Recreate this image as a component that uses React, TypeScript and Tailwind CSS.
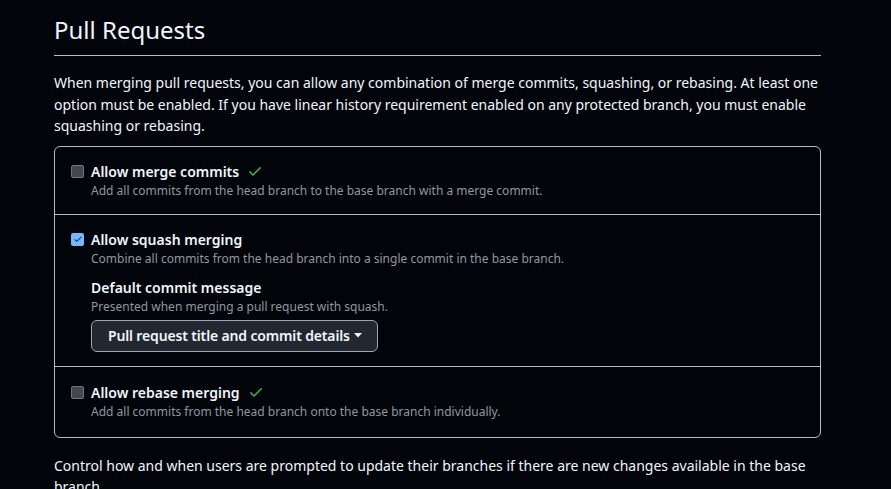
import React from 'react';

const Check = () => (
  <svg width="16" height="16" viewBox="0 0 16 16" className="ml-[8px] text-[#3fb950]" fill="currentColor">
    <path d="M13.78 4.22a.75.75 0 0 1 0 1.06l-7.25 7.25a.75.75 0 0 1-1.06 0L2.22 9.28a.751.751 0 0 1 .018-1.042.751.751 0 0 1 1.042-.018L6 10.94l6.72-6.72a.75.75 0 0 1 1.06 0Z" />
  </svg>
);

const Box = ({ checked }: { checked?: boolean }) =>
  checked ? (
    <span className="mt-[4px] flex h-[13px] w-[13px] shrink-0 items-center justify-center rounded-[2px] bg-[#74b9ff]">
      <svg width="10" height="10" viewBox="0 0 16 16" fill="#1b2636">
        <path d="M13.78 4.22a.75.75 0 0 1 0 1.06l-7.25 7.25a.75.75 0 0 1-1.06 0L2.22 9.28a.751.751 0 0 1 .018-1.042.751.751 0 0 1 1.042-.018L6 10.94l6.72-6.72a.75.75 0 0 1 1.06 0Z" />
      </svg>
    </span>
  ) : (
    <span className="mt-[4px] h-[13px] w-[13px] shrink-0 rounded-[2px] border border-[#6e7681] bg-[#44474d]" />
  );

export default function App() {
  return (
    <div className="min-h-screen bg-[#010409] text-[#f0f6fc]" style={{ fontFamily: '"Noto Sans", sans-serif' }}>
      <div className="ml-[54px] w-[767px]">
        <h2 className="border-b border-[#b7bdc8] pt-[12px] pb-[7px] text-[24px] leading-[36px]">Pull Requests</h2>
        <p className="mt-[16px] text-[14px] leading-[21.5px]">
          When merging pull requests, you can allow any combination of merge commits, squashing, or rebasing. At least one option must be enabled. If you have linear history requirement enabled on any protected branch, you must enable squashing or rebasing.
        </p>
        <div className="mt-[9px] rounded-[6px] border border-[#b7bdc8]">
          <div className="flex gap-[7px] px-[16px] py-[14px]">
            <Box />
            <div>
              <div className="flex items-center text-[14px] font-semibold leading-[21px]">
                Allow merge commits
                <Check />
              </div>
              <div className="text-[12px] leading-[18px] text-[#9198a1]">Add all commits from the head branch to the base branch with a merge commit.</div>
            </div>
          </div>
          <div className="flex gap-[7px] border-t border-[#b7bdc8] px-[16px] py-[14px]">
            <Box checked />
            <div>
              <div className="text-[14px] font-semibold leading-[21px]">Allow squash merging</div>
              <div className="text-[12px] leading-[18px] text-[#9198a1]">Combine all commits from the head branch into a single commit in the base branch.</div>
              <div className="mt-[9px] text-[14px] font-semibold leading-[21px]">Default commit message</div>
              <div className="text-[12px] leading-[18px] text-[#9198a1]">Presented when merging a pull request with squash.</div>
              <button className="mt-[4px] flex h-[32px] items-center gap-[4px] rounded-[6px] border border-[#9ea7b3] bg-[#212830] pl-[16px] pr-[15px] text-[14px] font-semibold tracking-[-0.15px] text-[#f0f6fc]">
                Pull request title and commit details
                <svg width="8" height="5" viewBox="0 0 8 5" fill="currentColor">
                  <path d="M0 0h8L4 4.5z" />
                </svg>
              </button>
            </div>
          </div>
          <div className="flex gap-[7px] border-t border-[#b7bdc8] px-[16px] pt-[15px] pb-[16px]">
            <Box />
            <div>
              <div className="flex items-center text-[14px] font-semibold leading-[21px]">
                Allow rebase merging
                <Check />
              </div>
              <div className="text-[12px] leading-[18px] text-[#9198a1]">Add all commits from the head branch onto the base branch individually.</div>
            </div>
          </div>
        </div>
        <p className="mt-[17px] text-[14px] leading-[21.5px]">
          Control how and when users are prompted to update their branches if there are new changes available in the base branch.
        </p>
      </div>
    </div>
  );
}
